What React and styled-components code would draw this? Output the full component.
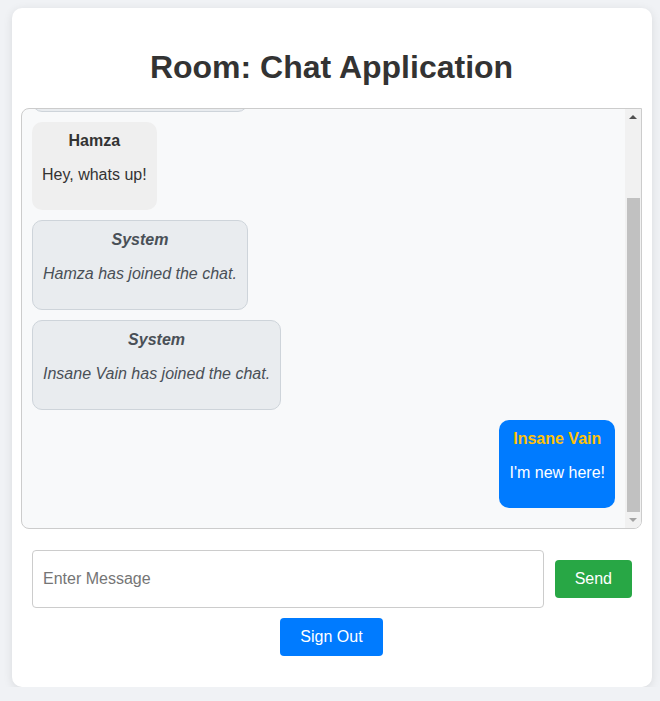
import React, { useLayoutEffect, useRef, useState } from 'react';
import styled, { createGlobalStyle } from 'styled-components';

const GlobalStyle = createGlobalStyle`
  body {
    margin: 0;
    background: #f0f2f5;
    font-family: "Liberation Sans", Arial, sans-serif;
  }
`;

const Page = styled.div`
  padding: 8px 8px 0 12px;
`;

const Card = styled.div`
  width: 640px;
  box-sizing: border-box;
  background: #fff;
  border-radius: 10px;
  box-shadow: 0 2px 10px rgba(0, 0, 0, 0.1);
  padding: 20px 10px 31px 9px;
`;

const Title = styled.h1`
  margin: 21px 0 22px;
  text-align: center;
  font-size: 32px;
  line-height: 37px;
  color: #333;
`;

const ChatFrame = styled.div`
  height: 421px;
  box-sizing: border-box;
  display: flex;
  border: 1px solid #ccc;
  border-radius: 8px 0 8px 8px;
  background: #f8f9fa;
  overflow: hidden;
`;

const MessageList = styled.div`
  flex: 1;
  overflow-y: auto;
  scrollbar-width: none;
  padding: 10px;
  display: flex;
  flex-direction: column;
  align-items: flex-start;
  gap: 10px;
`;

const ScrollBar = styled.div`
  width: 16px;
  flex-shrink: 0;
  display: flex;
  flex-direction: column;
  background: #f1f1f1;
`;

const ArrowButton = styled.div`
  height: 16px;
  flex-shrink: 0;
  display: flex;
  align-items: center;
  justify-content: center;
  &::after {
    content: '';
    border-left: 4px solid transparent;
    border-right: 4px solid transparent;
    ${(p) =>
      p.$dir === 'up'
        ? 'border-bottom: 4px solid #505050;'
        : 'border-top: 4px solid #a3a3a3;'}
  }
`;

const Track = styled.div`
  flex: 1;
  display: flex;
  flex-direction: column;
`;

const Thumb = styled.div`
  margin: 0 1px 0 2px;
  background: #c1c1c1;
`;

const Bubble = styled.div`
  flex-shrink: 0;
  padding: 10px;
  border-radius: 10px;
  text-align: center;
  font-size: 16px;
  line-height: 18px;
  background: #efefef;
  color: #333;
  border: 0 solid transparent;

  ${(p) =>
    p.$variant === 'system' &&
    `
    background: #e9ecef;
    border-width: 1px;
    border-color: #ced4da;
    color: #495057;
    font-style: italic;
  `}

  ${(p) =>
    p.$variant === 'own' &&
    `
    align-self: flex-end;
    background: #007bff;
    color: #fff;
  `}
`;

const Sender = styled.strong`
  display: block;
  color: ${(p) => (p.$own ? '#ffc107' : 'inherit')};
`;

const Text = styled.p`
  margin: 16px 0;
`;

const Spacer = styled.div`
  flex-shrink: 0;
  height: 0;
`;

const InputRow = styled.form`
  display: flex;
  align-items: center;
  gap: 11px;
  padding: 0 10px 0 11px;
  margin-top: 21px;
`;

const MessageInput = styled.input`
  flex: 1;
  height: 58px;
  box-sizing: border-box;
  padding: 10px;
  border: 1px solid #ccc;
  border-radius: 4px;
  font-size: 16px;
  font-family: inherit;
  color: #333;
  &::placeholder {
    color: #757575;
  }
`;

const Button = styled.button`
  border: none;
  border-radius: 4px;
  padding: 10px 20px;
  font-size: 16px;
  line-height: 18px;
  font-family: inherit;
  color: #fff;
  cursor: pointer;
  background: ${(p) => (p.$color === 'green' ? '#28a745' : '#007bff')};
`;

const Footer = styled.div`
  display: flex;
  justify-content: center;
  margin-top: 10px;
`;

const messages = [
  { sender: 'System', text: 'Hamza has joined the chat.', variant: 'system' },
  { sender: 'Hamza', text: 'Hey, whats up!', variant: 'other' },
  { sender: 'System', text: 'Hamza has joined the chat.', variant: 'system' },
  { sender: 'System', text: 'Insane Vain has joined the chat.', variant: 'system' },
  { sender: 'Insane Vain', text: "I'm new here!", variant: 'own' },
];

export default function App() {
  const listRef = useRef(null);
  const trackRef = useRef(null);
  const [thumb, setThumb] = useState({ top: 0, height: 0 });

  useLayoutEffect(() => {
    const list = listRef.current;
    const track = trackRef.current;
    if (!list || !track) return;
    list.scrollTop = list.scrollHeight;
    const trackH = track.clientHeight;
    const height = Math.round((trackH * list.clientHeight) / list.scrollHeight);
    const range = list.scrollHeight - list.clientHeight;
    const top = range > 0 ? Math.round(((trackH - height) * list.scrollTop) / range) : 0;
    setThumb({ top, height });
  }, []);

  return (
    <Page>
      <GlobalStyle />
      <Card>
        <Title>Room: Chat Application</Title>
        <ChatFrame>
          <MessageList ref={listRef}>
            {messages.map((m, i) => (
              <Bubble key={i} $variant={m.variant}>
                <Sender $own={m.variant === 'own'}>{m.sender}</Sender>
                <Text>{m.text}</Text>
              </Bubble>
            ))}
            <Spacer />
          </MessageList>
          <ScrollBar>
            <ArrowButton $dir="up" />
            <Track ref={trackRef}>
              <Thumb style={{ marginTop: thumb.top, height: thumb.height }} />
            </Track>
            <ArrowButton $dir="down" />
          </ScrollBar>
        </ChatFrame>
        <InputRow onSubmit={(e) => e.preventDefault()}>
          <MessageInput placeholder="Enter Message" />
          <Button type="submit" $color="green">Send</Button>
        </InputRow>
        <Footer>
          <Button type="button">Sign Out</Button>
        </Footer>
      </Card>
    </Page>
  );
}
